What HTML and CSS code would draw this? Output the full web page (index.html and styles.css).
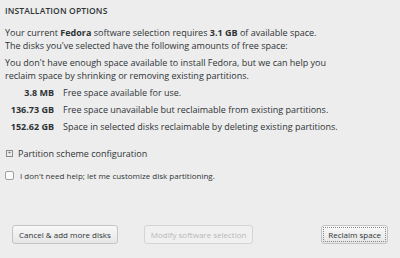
FILE: index.html
```html
<!DOCTYPE html>
<html lang="en">
<head>
  <meta charset="UTF-8">
  <title>Installation Options</title>
  <link rel="stylesheet" href="styles.css">
</head>
<body>
  <div class="dialog">
    <h1 class="title">INSTALLATION OPTIONS</h1>

    <p class="intro">Your current <b>Fedora</b> software selection requires <b>3.1 GB</b> of available space.<br>
    The disks you've selected have the following amounts of free space:</p>

    <p class="intro">You don't have enough space available to install Fedora, but we can help you<br>
    reclaim space by shrinking or removing existing partitions.</p>

    <div class="space-table">
      <span class="amount">3.8 MB</span><span>Free space available for use.</span>
      <span class="amount">136.73 GB</span><span>Free space unavailable but reclaimable from existing partitions.</span>
      <span class="amount">152.62 GB</span><span>Space in selected disks reclaimable by deleting existing partitions.</span>
    </div>

    <div class="expander">
      <span class="plus-box">+</span>
      <span>Partition scheme configuration</span>
    </div>

    <label class="check">
      <span class="box"></span>
      <span>I don't need help; let me customize disk partitioning.</span>
    </label>

    <div class="buttons">
      <button class="btn">Cancel &amp; add more disks</button>
      <button class="btn" disabled>Modify software selection</button>
      <span class="spacer"></span>
      <button class="btn default">Reclaim space</button>
    </div>
  </div>
</body>
</html>
```

FILE: styles.css
```css
body {
  margin: 0;
  background-color: #ededed;
  font-family: "Open Sans", sans-serif;
  font-size: 9px;
  color: #2e3436;
}
.dialog {
  width: 400px;
  height: 258px;
  padding: 5px 6px 0 5px;
  box-sizing: border-box;
}
.title {
  margin: 0;
  font-size: 8.5px;
  font-weight: 600;
  letter-spacing: 0.15px;
  line-height: 12px;
}
.intro {
  margin: 9px 0 0 0;
  line-height: 13px;
}
.intro + .intro {
  margin-top: 4px;
}
.intro b {
  font-weight: 700;
}
.space-table {
  display: grid;
  grid-template-columns: 49px auto;
  column-gap: 9px;
  row-gap: 4px;
  margin-top: 4px;
  line-height: 13px;
}
.amount {
  text-align: right;
  font-weight: 700;
}
.expander {
  display: flex;
  align-items: center;
  gap: 5px;
  margin-top: 14px;
  line-height: 13px;
}
.plus-box {
  width: 5px;
  height: 5px;
  margin-left: 1px;
  border: 1px solid #8a8a8a;
  font-size: 6px;
  line-height: 5px;
  text-align: center;
  color: #555;
}
.check {
  display: flex;
  align-items: center;
  gap: 6px;
  margin-top: 9px;
  font-size: 8px;
  line-height: 13px;
}
.box {
  width: 7px;
  height: 7px;
  border: 1px solid #a0a0a0;
  border-radius: 2px;
  background-color: #fafafa;
}
.buttons {
  display: flex;
  gap: 26px;
  margin-top: 43px;
  padding: 0 6px 0 7px;
}
.spacer {
  flex: 1;
}
.btn {
  font-family: inherit;
  font-size: 8px;
  color: #2e3436;
  height: 19px;
  padding: 0 6px;
  border: 1px solid #c4c4c4;
  border-radius: 3px;
  background: linear-gradient(#f8f8f8, #e6e6e6);
}
.btn:disabled {
  color: #b8b8b8;
  background: #f0f0f0;
  border-color: #d4d4d4;
}
.btn.default {
  outline: 1px dotted #888;
  outline-offset: -3px;
}
```
